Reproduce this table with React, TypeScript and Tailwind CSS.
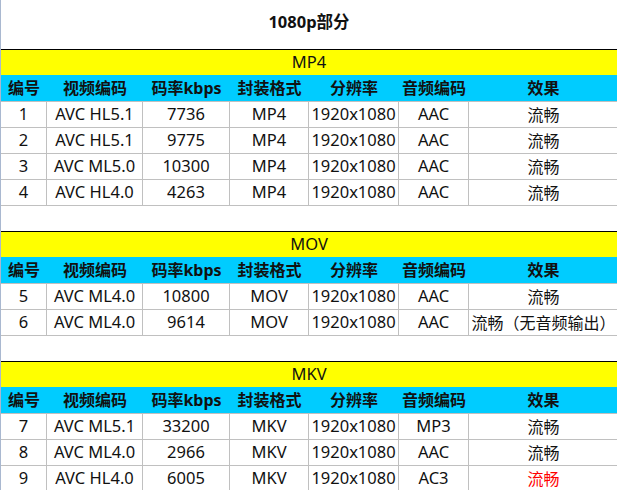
const cols = "grid grid-cols-[46px_96px_87px_79px_90px_70px_149px]";

const headers = ["编号", "视频编码", "码率kbps", "封装格式", "分辨率", "音频编码", "效果"];

type Row = { id: string; codec: string; rate: string; box: string; res: string; audio: string; effect: string; warn?: boolean };

const sections: { name: string; rows: Row[] }[] = [
  {
    name: "MP4",
    rows: [
      { id: "1", codec: "AVC HL5.1", rate: "7736", box: "MP4", res: "1920x1080", audio: "AAC", effect: "流畅" },
      { id: "2", codec: "AVC HL5.1", rate: "9775", box: "MP4", res: "1920x1080", audio: "AAC", effect: "流畅" },
      { id: "3", codec: "AVC ML5.0", rate: "10300", box: "MP4", res: "1920x1080", audio: "AAC", effect: "流畅" },
      { id: "4", codec: "AVC HL4.0", rate: "4263", box: "MP4", res: "1920x1080", audio: "AAC", effect: "流畅" },
    ],
  },
  {
    name: "MOV",
    rows: [
      { id: "5", codec: "AVC ML4.0", rate: "10800", box: "MOV", res: "1920x1080", audio: "AAC", effect: "流畅" },
      { id: "6", codec: "AVC ML4.0", rate: "9614", box: "MOV", res: "1920x1080", audio: "AAC", effect: "流畅（无音频输出）" },
    ],
  },
  {
    name: "MKV",
    rows: [
      { id: "7", codec: "AVC ML5.1", rate: "33200", box: "MKV", res: "1920x1080", audio: "MP3", effect: "流畅" },
      { id: "8", codec: "AVC ML4.0", rate: "2966", box: "MKV", res: "1920x1080", audio: "AAC", effect: "流畅" },
      { id: "9", codec: "AVC HL4.0", rate: "6005", box: "MKV", res: "1920x1080", audio: "AC3", effect: "流畅", warn: true },
    ],
  },
];

function Section({ name, rows, last }: { name: string; rows: Row[]; last: boolean }) {
  return (
    <div>
      <div className="flex h-[26px] items-center justify-center border-t border-black bg-[#ffff00]">{name}</div>
      <div className={`${cols} h-[26px] items-center bg-[#00ccff] text-center text-[16px] font-bold`}>
        {headers.map((h) => (
          <div key={h}>{h}</div>
        ))}
      </div>
      <div className="border-t border-[#c0c0c0]">
        {rows.map((r) => (
          <div key={r.id} className={`${cols} h-[26px] border-b border-[#c0c0c0] text-center`}>
            {[r.id, r.codec, r.rate, r.box, r.res, r.audio].map((v, i) => (
              <div key={i} className="flex items-center justify-center border-r border-[#c0c0c0] whitespace-nowrap">
                {v}
              </div>
            ))}
            <div className={`flex items-center justify-center whitespace-nowrap text-[16px] ${r.warn ? "text-[#ff0000]" : ""}`}>{r.effect}</div>
          </div>
        ))}
      </div>
      {!last && <div className="h-[25px]" />}
    </div>
  );
}

export default function App() {
  return (
    <div className="h-[490px] w-[617px] overflow-hidden border-l border-[#a9b8d0] bg-white text-[16.5px] leading-none text-[#111] [font-family:'Noto_Sans','Noto_Sans_CJK_SC',sans-serif]">
      <div className="flex h-[49px] items-center justify-center pb-[4px] font-bold">1080p部分</div>
      {sections.map((s, i) => (
        <Section key={s.name} name={s.name} rows={s.rows} last={i === sections.length - 1} />
      ))}
    </div>
  );
}
